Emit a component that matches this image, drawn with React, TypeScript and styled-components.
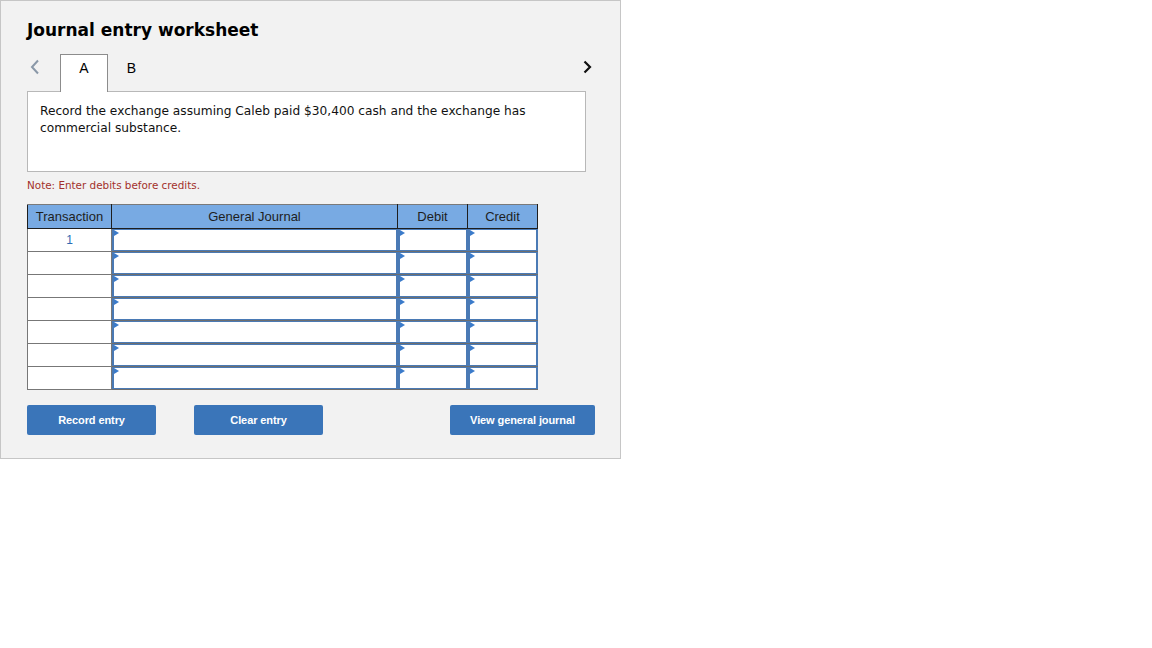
import React from 'react';
import styled, { createGlobalStyle } from 'styled-components';

const GlobalStyle = createGlobalStyle`
	body {
		margin: 0;
		background: #ffffff;
		font-family: 'DejaVu Sans', Verdana, sans-serif;
	}
`;

const Panel = styled.div`
	box-sizing: border-box;
	width: 621px;
	height: 459px;
	border: 1px solid #c6c6c6;
	background: #f2f2f2;
	padding: 17px 25px 0 26px;
`;

const Title = styled.h2`
	margin: 0;
	font-family: 'DejaVu Sans', Verdana, sans-serif;
	font-size: 17px;
	font-weight: bold;
	line-height: 24px;
	color: #000;
`;

const TabsRow = styled.div`
	display: flex;
	align-items: flex-start;
	height: 37px;
	margin-top: 12px;
`;

const Arrow = styled.button<{ $side: 'left' | 'right' }>`
	display: flex;
	justify-content: ${({ $side }) => ($side === 'left' ? 'flex-start' : 'flex-end')};
	width: 33px;
	padding: ${({ $side }) => ($side === 'left' ? '5px 0 0 3px' : '6px 3px 0 0')};
	margin-left: ${({ $side }) => ($side === 'right' ? 'auto' : '0')};
	border: none;
	background: none;
	cursor: pointer;
`;

const Tab = styled.div<{ $active?: boolean }>`
	box-sizing: border-box;
	width: ${({ $active }) => ($active ? '48px' : '47px')};
	height: 38px;
	display: flex;
	justify-content: center;
	padding-top: 5px;
	font-family: 'Liberation Sans', Arial, sans-serif;
	font-size: 14px;
	color: #000;
	background: ${({ $active }) => ($active ? '#ffffff' : 'transparent')};
	border: 1px solid ${({ $active }) => ($active ? '#8c8c8c' : 'transparent')};
	border-bottom: none;
	position: relative;
	z-index: 1;
`;

const Prompt = styled.div`
	box-sizing: border-box;
	width: 559px;
	height: 81px;
	background: #ffffff;
	border: 1px solid #b8b8b8;
	padding: 11px 12px;
	font-size: 12.2px;
	line-height: 17px;
	color: #111;
`;

const Note = styled.div`
	margin-top: 6px;
	font-size: 10.4px;
	line-height: 14px;
	color: #a3312b;
`;

const Table = styled.table`
	margin-top: 12px;
	border-collapse: collapse;
	table-layout: fixed;
	font-family: 'Liberation Sans', Arial, sans-serif;
`;

const HeadCell = styled.th<{ $w: number }>`
	width: ${({ $w }) => $w}px;
	height: 23px;
	padding: 0;
	background: #78aae3;
	border: 1px solid #1e1e1e;
	border-top-color: #7a7a7a;
	font-size: 13px;
	font-weight: normal;
	color: #1e1e1e;
`;

const NumCell = styled.td`
	height: 22px;
	padding: 0;
	background: #ffffff;
	border: 1px solid #777;
	text-align: center;
	font-size: 12px;
	color: #2d6cb3;
`;

const InputCell = styled.td`
	height: 22px;
	padding: 0;
	border: 1px solid #6e6e6e;
	border-right-color: #4a7ab5;
`;

const Field = styled.div`
	position: relative;
	box-sizing: border-box;
	height: 22px;
	background: #ffffff;
	border: 2px solid #4a7ab5;
	border-top-width: 1px;
	border-bottom-width: 1px;
	border-right-width: 1px;
`;

const Marker = styled.span`
	position: absolute;
	top: 0;
	left: 0;
	width: 0;
	height: 0;
	border-top: 3px solid transparent;
	border-bottom: 3px solid transparent;
	border-left: 5px solid #3b7bca;
`;

const ButtonRow = styled.div`
	display: flex;
	margin-top: 15px;
`;

const ActionButton = styled.button<{ $w: number; $ml: number }>`
	width: ${({ $w }) => $w}px;
	height: 30px;
	margin-left: ${({ $ml }) => $ml}px;
	border: none;
	border-radius: 2px;
	background: #3a75b9;
	color: #ffffff;
	font-family: 'Liberation Sans', Arial, sans-serif;
	font-size: 11px;
	font-weight: bold;
	letter-spacing: -0.1px;
	cursor: pointer;
`;

const rows = [1, 2, 3, 4, 5, 6, 7];

export default function App() {
	return (
		<>
			<GlobalStyle />
			<Panel>
				<Title>Journal entry worksheet</Title>
				<TabsRow>
					<Arrow $side="left" aria-label="previous">
						<svg width="10" height="16" viewBox="0 0 10 16">
							<polyline points="8,1.5 2,8 8,14.5" fill="none" stroke="#8a98a8" strokeWidth="2" />
						</svg>
					</Arrow>
					<Tab $active>A</Tab>
					<Tab>B</Tab>
					<Arrow $side="right" aria-label="next">
						<svg width="9" height="14" viewBox="0 0 9 14">
							<polyline points="1.5,1.5 7,7 1.5,12.5" fill="none" stroke="#111" strokeWidth="2.2" />
						</svg>
					</Arrow>
				</TabsRow>
				<Prompt>
					Record the exchange assuming Caleb paid $30,400 cash and the exchange has commercial substance.
				</Prompt>
				<Note>Note: Enter debits before credits.</Note>
				<Table>
					<thead>
						<tr>
							<HeadCell $w={83}>Transaction</HeadCell>
							<HeadCell $w={285}>General Journal</HeadCell>
							<HeadCell $w={69}>Debit</HeadCell>
							<HeadCell $w={69}>Credit</HeadCell>
						</tr>
					</thead>
					<tbody>
						{rows.map((r) => (
							<tr key={r}>
								<NumCell>{r === 1 ? '1' : ''}</NumCell>
								{['journal', 'debit', 'credit'].map((c) => (
									<InputCell key={c}>
										<Field>
											<Marker />
										</Field>
									</InputCell>
								))}
							</tr>
						))}
					</tbody>
				</Table>
				<ButtonRow>
					<ActionButton $w={129} $ml={0}>Record entry</ActionButton>
					<ActionButton $w={129} $ml={38}>Clear entry</ActionButton>
					<ActionButton $w={145} $ml={127}>View general journal</ActionButton>
				</ButtonRow>
			</Panel>
		</>
	);
}
